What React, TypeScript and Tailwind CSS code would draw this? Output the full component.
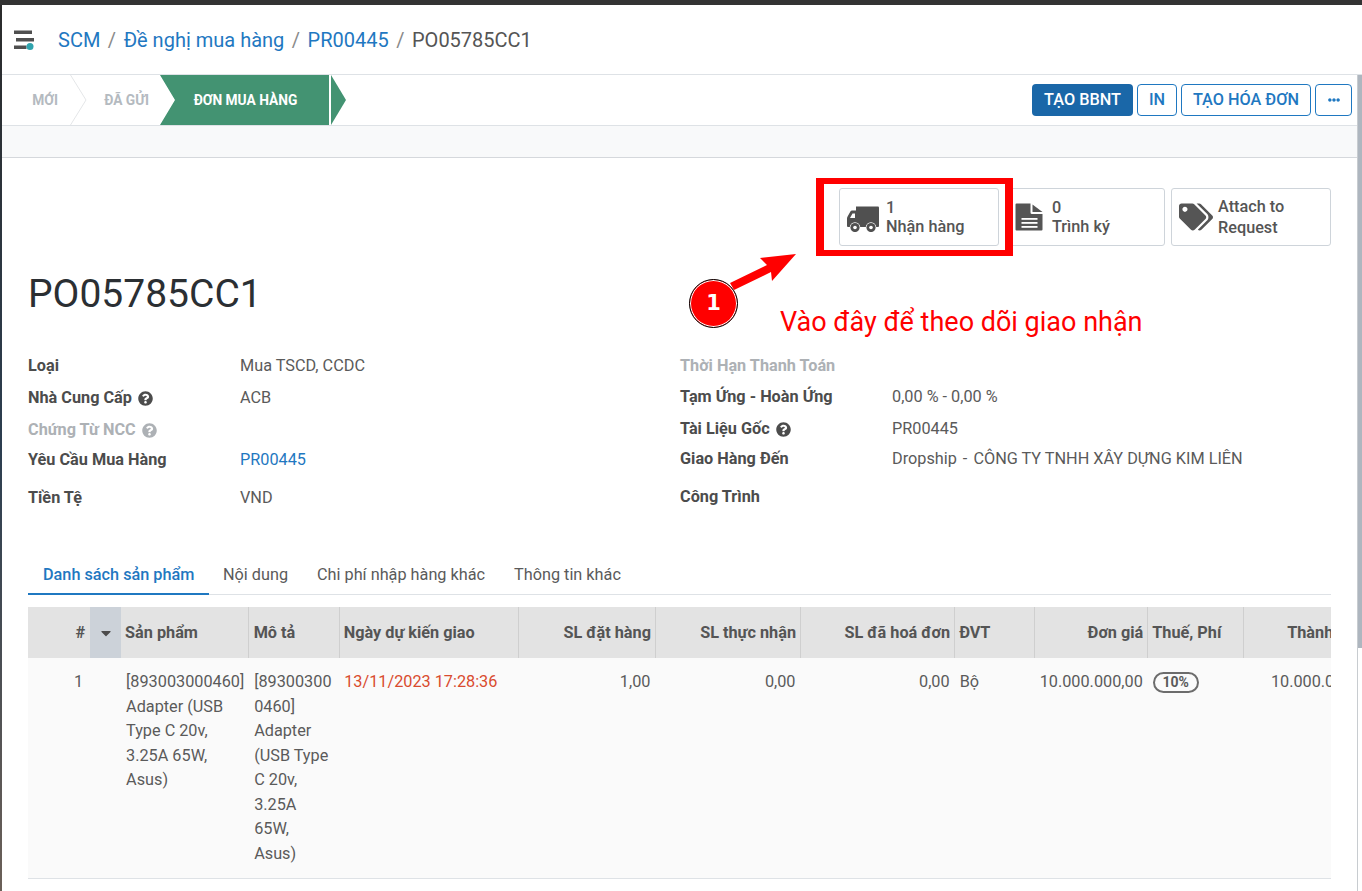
import React from "react";
import { FaTags, FaQuestionCircle, FaEllipsisH, FaCaretDown } from "react-icons/fa";

const link = "text-[#1f78c1]";

function Logo() {
  return (
    <svg width="20" height="20" viewBox="0 0 20 20" className="block">
      <rect x="0" y="0.5" width="18" height="3.5" fill="#4f4f4f" />
      <rect x="2" y="8" width="18" height="3.5" fill="#4f4f4f" />
      <rect x="0" y="15.5" width="12.5" height="3.5" fill="#4f4f4f" />
      <circle cx="16" cy="16.5" r="3.5" fill="#2fa3ad" />
    </svg>
  );
}

function Truck() {
  return (
    <svg width="33" height="26" viewBox="4 8 33 26" className="mt-[4px] block" fill="#505050">
      <path d="M13 8.5 H35 Q36 8.5 36 9.5 V28 Q36 29 35 29 H13 Z" />
      <path fillRule="evenodd" d="M13 12.5 H9 Q8 12.5 7.4 13.5 L4.6 18.5 Q4 19.5 4 20.5 V28 Q4 29 5 29 H13 Z M7 20 L9.5 15.5 H12 V20 Z" />
      <circle cx="12" cy="29.5" r="5.3" fill="#fff" />
      <circle cx="28" cy="29.5" r="5.3" fill="#fff" />
      <circle cx="12" cy="29.5" r="4.6" />
      <circle cx="28" cy="29.5" r="4.6" />
      <circle cx="12" cy="29.5" r="1.8" fill="#fff" />
      <circle cx="28" cy="29.5" r="1.8" fill="#fff" />
    </svg>
  );
}

function FileIcon() {
  return (
    <svg width="28" height="28" viewBox="5.5 4.5 28 28" className="-ml-[1px] block" fill="#555">
      <path d="M7 5 H21 V14 Q21 15.5 22.5 15.5 H33 V31 Q33 32 32 32 H7 Q6 32 6 31 V6 Q6 5 7 5 Z" />
      <path d="M23 6 L33 13.5 H23 Z" />
      <rect x="12" y="19.5" width="16" height="1.8" fill="#fff" />
      <rect x="12" y="23.5" width="16" height="1.8" fill="#fff" />
      <rect x="12" y="27.5" width="16" height="1.8" fill="#fff" />
    </svg>
  );
}

function Chevron() {
  return (
    <svg width="17" height="50" viewBox="0 0 17 50" className="block">
      <path d="M0.5 0 L16 25 L0.5 50" fill="none" stroke="#e4e6e8" strokeWidth="1" />
    </svg>
  );
}

function Status() {
  return (
    <div className="flex h-[50px] items-stretch">
      <div className="flex w-[68px] items-center justify-end pr-[12px] text-[13.75px] font-bold text-[#b4bac0]">MỚI</div>
      <Chevron />
      <div className="flex w-[73px] items-center justify-end pr-[11px] text-[13.75px] font-bold text-[#b4bac0]">ĐÃ GỬI</div>
      <div className="flex w-[169px] items-center justify-center bg-[#439372] pl-[2px] text-[13.75px] font-bold text-white [clip-path:polygon(0_0,100%_0,100%_100%,0_100%,15px_50%)]">
        ĐƠN MUA HÀNG
      </div>
      <div className="ml-[2px] w-[15px] bg-[#439372] [clip-path:polygon(0_0,100%_50%,0_100%)]" />
    </div>
  );
}

function Actions() {
  const outline = "flex h-[32px] items-center justify-center rounded-[4px] border border-[#1f78c1] bg-white text-[16.25px] font-medium text-[#1f78c1]";
  return (
    <div className="flex items-center gap-[4px] pr-[5px]">
      <div className="flex h-[32px] w-[101px] items-center justify-center rounded-[4px] bg-[#1a67a8] text-[16.25px] font-medium text-white">TẠO BBNT</div>
      <div className={`${outline} w-[40px]`}>IN</div>
      <div className={`${outline} w-[130px]`}>TẠO HÓA ĐƠN</div>
      <div className={`${outline} w-[37px]`}>
        <FaEllipsisH className="text-[12px]" />
      </div>
    </div>
  );
}

function Stat({ icon, children }: { icon: React.ReactNode; children: React.ReactNode }) {
  return (
    <div className="flex h-[58px] w-[160px] items-center rounded-[3px] border border-[#ced4da] bg-white text-[#555]">
      <div className="flex w-[46px] shrink-0 justify-center pl-[1px]">{icon}</div>
      <div className="text-[16.25px] leading-[19.5px]">{children}</div>
    </div>
  );
}

function Field({ label, muted, help, value, valueLink, className }: { label: string; muted?: boolean; help?: boolean; value?: React.ReactNode; valueLink?: boolean; className?: string }) {
  return (
    <div className={`flex items-center ${className ?? ""}`}>
      <div className={`flex w-[212px] shrink-0 items-center gap-[6px] text-[16.25px] font-bold ${muted ? "text-[#adb1b5]" : "text-[#4c4c4c]"}`}>
        {label}
        {help && <FaQuestionCircle className={`text-[15px] ${muted ? "text-[#adb1b5]" : "text-[#4c4c4c]"}`} />}
      </div>
      <div className={`text-[16.25px] ${valueLink ? link : "text-[#5a5a5a]"}`}>{value}</div>
    </div>
  );
}

const colWidths = [62, 31, 127, 91, 179, 137, 145, 154, 80, 113, 96, 135];

function Table() {
  const th = "h-[51px] border-r border-[#cfcfcf] pl-[5px] pr-[4px] pt-[1px] align-middle text-[16.25px] font-bold text-[#555]";
  const td = "px-[5px] pt-[12px] pb-[12px] align-top text-[16.25px] leading-[24.5px] text-[#5a5a5a] break-words";
  return (
    <div className="mt-[12px] overflow-hidden">
      <table className="w-[1351px] table-fixed border-collapse">
        <colgroup>
          {colWidths.map((w, i) => (
            <col key={i} style={{ width: w }} />
          ))}
        </colgroup>
        <thead>
          <tr className="bg-[#e3e3e3]">
            <th className="h-[51px] px-[5px] pt-[1px] text-right text-[16.25px] font-bold text-[#555]">#</th>
            <th className="h-[51px] bg-[#ccd2d9] text-[#4c4c4c]">
              <div className="flex justify-center"><FaCaretDown className="text-[16px]" /></div>
            </th>
            <th className={`${th} text-left !pl-[4px]`}>Sản phẩm</th>
            <th className={`${th} text-left`}>Mô tả</th>
            <th className={`${th} text-left !pl-[4px]`}>Ngày dự kiến giao</th>
            <th className={`${th} text-right`}>SL đặt hàng</th>
            <th className={`${th} text-right`}>SL thực nhận</th>
            <th className={`${th} text-right`}>SL đã hoá đơn</th>
            <th className={`${th} text-left !pl-[4px]`}>ĐVT</th>
            <th className={`${th} text-right`}>Đơn giá</th>
            <th className={`${th} text-left !pl-[4px]`}>Thuế, Phí</th>
            <th className="h-[51px] whitespace-nowrap pr-[14px] pt-[1px] text-right text-[16.25px] font-bold text-[#555]">Thành tiền</th>
          </tr>
        </thead>
        <tbody>
          <tr className="border-b border-[#dee2e6] bg-[#fafafa]">
            <td className={`${td} text-center`} style={{ paddingLeft: 44 }}>1</td>
            <td className={td}></td>
            <td className={`${td} !pr-[2px]`}>[893003000460] Adapter (USB Type C 20v, 3.25A 65W, Asus)</td>
            <td className={`${td} !pl-[6px] !pr-[7px]`}>[893003000460] Adapter (USB Type C 20v, 3.25A 65W, Asus)</td>
            <td className={`${td} text-[#d94b2e]`}>13/11/2023 17:28:36</td>
            <td className={`${td} text-right`}>1,00</td>
            <td className={`${td} text-right`}>0,00</td>
            <td className={`${td} text-right`}>0,00</td>
            <td className={td}>Bộ</td>
            <td className={`${td} whitespace-nowrap text-right`}>10.000.000,00</td>
            <td className={td}>
              <span className="inline-flex h-[21px] w-[46px] items-center justify-center rounded-full border-2 border-[#6c6c6c] text-[14px] font-bold leading-none text-[#5a5a5a]">10%</span>
            </td>
            <td className={`${td} whitespace-nowrap text-right`}>10.000.000,00</td>
          </tr>
        </tbody>
      </table>
    </div>
  );
}

function Annotation() {
  return (
    <>
      <div className="absolute left-[816px] top-[178px] h-[78px] w-[197px] border-x-[8px] border-y-[6px] border-[#ff0000]" />
      <svg className="absolute left-[720px] top-[250px]" width="80" height="42" viewBox="0 0 80 42">
        <polygon points="76,4 40,8 47,15 10,33 14,40 51,22 52,31" fill="#ff0000" />
      </svg>
      <div className="absolute left-[689px] top-[279px] flex h-[49px] w-[49px] items-center justify-center rounded-full border border-black bg-[#ff0000] font-bold text-white shadow-[inset_0_0_0_1px_#fff]">
        <span className="[font-family:'DejaVu_Sans',sans-serif] text-[21px] leading-none">1</span>
      </div>
      <div className="absolute left-[780px] top-[305px] whitespace-nowrap text-[27px] leading-[34px] text-[#ff0000]">Vào đây để theo dõi giao nhận</div>
    </>
  );
}

export default function App() {
  return (
    <div className="relative flex h-[891px] w-[1362px] flex-col overflow-hidden bg-[#333] pt-[5px] [font-family:Roboto,sans-serif]">
      <div className="flex min-h-0 flex-1 flex-col bg-white pl-[2px]">
        <div className="absolute bottom-0 left-0 top-[5px] w-[2px] bg-[linear-gradient(to_bottom,#2b2b2b,#2c3e50_50%,#6b6058)]" />
        <header className="flex h-[70px] shrink-0 items-center border-b border-[#dee2e6] pl-[12px]">
          <Logo />
          <div className="ml-[24px] mt-[1px] flex items-center text-[20px]">
            <span className={link}>SCM</span>
            <span className="mx-[7.5px] text-[#8a8a8a]">/</span>
            <span className={link}>Đề nghị mua hàng</span>
            <span className="mx-[7.5px] text-[#8a8a8a]">/</span>
            <span className={link}>PR00445</span>
            <span className="mx-[7.5px] text-[#8a8a8a]">/</span>
            <span className="text-[#555]">PO05785CC1</span>
          </div>
        </header>
        <div className="flex min-h-0 flex-1">
          <main className="min-w-0 flex-1">
            <div className="flex h-[51px] items-center justify-between border-b border-[#dee2e6]">
              <Status />
              <Actions />
            </div>
            <div className="h-[32px] border-b border-[#d5d8dc] bg-[#f8f9fa]" />
            <div className="px-[26px]">
              <div className="flex justify-end gap-[6px] pt-[30px]">
                <Stat icon={<Truck />}>
                  <div className="font-medium">1</div>
                  <div className="font-medium">Nhận hàng</div>
                </Stat>
                <Stat icon={<FileIcon />}>
                  <div className="font-medium">0</div>
                  <div className="font-medium">Trình ký</div>
                </Stat>
                <Stat icon={<FaTags className="text-[34px]" />}>
                  <div className="font-medium leading-[21px]">Attach to</div>
                  <div className="font-medium leading-[21px]">Request</div>
                </Stat>
              </div>
              <h1 className="mt-[23px] text-[39px] font-normal leading-[50px] text-[#2b2f33]">PO05785CC1</h1>
              <div className="mt-[31px] grid grid-cols-[652px_1fr]">
                <div>
                  <Field label="Loại" value="Mua TSCD, CCDC" className="h-[32px]" />
                  <Field label="Nhà Cung Cấp" help value="ACB" className="h-[32px]" />
                  <Field label="Chứng Từ NCC" muted help className="h-[32px]" />
                  <Field label="Yêu Cầu Mua Hàng" value="PR00445" valueLink className="h-[28px]" />
                  <Field label="Tiền Tệ" value="VND" className="mt-[10px] h-[28px]" />
                </div>
                <div>
                  <Field label="Thời Hạn Thanh Toán" muted className="h-[32px]" />
                  <Field label="Tạm Ứng - Hoàn Ứng" value="0,00 % - 0,00 %" className="h-[31px]" />
                  <Field label="Tài Liệu Gốc" help value="PR00445" className="h-[32px]" />
                  <Field
                    label="Giao Hàng Đến"
                    value={
                      <>
                        Dropship<span className="mx-[2px]"> - </span>CÔNG TY TNHH XÂY DỰNG KIM LIÊN
                      </>
                    }
                    className="h-[29px]"
                  />
                  <Field label="Công Trình" className="mt-[9px] h-[28px]" />
                </div>
              </div>
              <div className="mt-[44px] flex h-[39px] items-stretch border-b border-[#dee2e6] text-[16.25px] text-[#5a5a5a]">
                <div className="-mb-[1px] flex items-center border-b-2 border-[#1f78c1] px-[15px] pt-[1px] font-medium text-[#1f78c1]">Danh sách sản phẩm</div>
                <div className="flex items-center pl-[13.5px] pr-[14px] pt-[1px]">Nội dung</div>
                <div className="flex items-center px-[15px] pt-[1px]">Chi phí nhập hàng khác</div>
                <div className="flex items-center px-[14px] pt-[1px]">Thông tin khác</div>
              </div>
              <Table />
            </div>
          </main>
          <div className="w-[5px] shrink-0 border-l border-[#c8ccd0] bg-white">
            <div className="h-[573px] bg-[#aeb6bf]" />
          </div>
        </div>
      </div>
      <Annotation />
    </div>
  );
}
